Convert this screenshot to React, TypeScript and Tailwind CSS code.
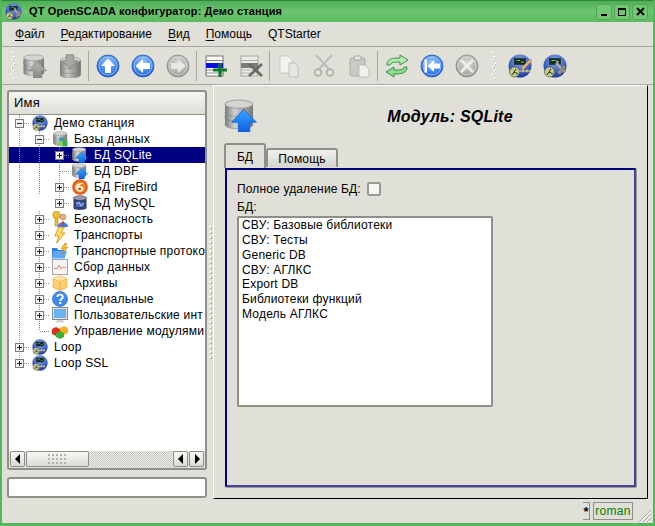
import { useId } from "react";
import type { ReactNode } from "react";

const BODY_FONT = "font-['Liberation_Sans',Arial,sans-serif]";

/* ---------- small drawings ---------- */

function Disc({ y, fill }: { y: number; fill: string }) {
  return (
    <g>
      <rect x="1" y={y} width="27" height="8" fill={fill} />
      <ellipse cx="14.5" cy={y + 8} rx="13.5" ry="4" fill={fill} stroke="#777" strokeWidth="0.5" />
      <rect x="1" y={y} width="27" height="8" fill={fill} />
      <ellipse cx="14.5" cy={y} rx="13.5" ry="4" fill="#d4d4d2" stroke="#8a8a8a" strokeWidth="0.7" />
    </g>
  );
}

function DbIcon({ size = 16, gray = false }: { size?: number; gray?: boolean }) {
  const id = useId();
  const fill = `url(#${id}-disc)`;
  return (
    <svg width={size} height={size} viewBox="0 0 32 32" className="shrink-0">
      <defs>
        <linearGradient id={`${id}-disc`} x1="0" x2="1" y1="0" y2="0">
          <stop offset="0%" stopColor="#7d7d7d" />
          <stop offset="35%" stopColor="#d2d2d0" />
          <stop offset="100%" stopColor="#777" />
        </linearGradient>
        <linearGradient id={`${id}-arrow`} x1="0" x2="0" y1="0" y2="1">
          <stop offset="0%" stopColor={gray ? "#b4b4ae" : "#38a8ff"} />
          <stop offset="100%" stopColor={gray ? "#8a8a84" : "#0a62e8"} />
        </linearGradient>
      </defs>
      <Disc y={17} fill={fill} />
      <Disc y={10} fill={fill} />
      <Disc y={5} fill={fill} />
      <path
        d="M19 10 L31.5 22.5 H25 V32 H14 V22.5 H7.5 Z"
        fill={`url(#${id}-arrow)`}
        stroke={gray ? "#777" : "#0a58c8"}
        strokeWidth="0.7"
      />
    </svg>
  );
}

function DbDownGray() {
  const id = useId();
  return (
    <svg width="24" height="24" viewBox="0 0 32 32">
      <defs>
        <linearGradient id={id} x1="0" x2="1" y1="0" y2="0">
          <stop offset="0%" stopColor="#7d7d78" />
          <stop offset="35%" stopColor="#c8c8c2" />
          <stop offset="100%" stopColor="#75756f" />
        </linearGradient>
      </defs>
      <g transform="translate(2 0)">
        <Disc y={20} fill={`url(#${id})`} />
        <Disc y={14} fill={`url(#${id})`} />
        <Disc y={8} fill={`url(#${id})`} />
      </g>
      <path d="M11 1 H21 V9 H26 L16 20 L6 9 H11 Z" fill="#a8a8a2" stroke="#6f6f6a" strokeWidth="0.8" />
    </svg>
  );
}

function DbsIcon() {
  const id = useId();
  return (
    <svg width="16" height="16" viewBox="0 0 32 32" className="shrink-0">
      <defs>
        <linearGradient id={id} x1="0" x2="1" y1="0" y2="0">
          <stop offset="0%" stopColor="#7d7d7d" />
          <stop offset="35%" stopColor="#d2d2d0" />
          <stop offset="100%" stopColor="#777" />
        </linearGradient>
      </defs>
      <g transform="translate(2 0)">
        <Disc y={17} fill={`url(#${id})`} />
        <Disc y={10} fill={`url(#${id})`} />
        <Disc y={5} fill={`url(#${id})`} />
      </g>
      <rect x="14" y="13" width="10" height="7" fill="#2f9ad0" />
      <rect x="20" y="18" width="11" height="13" fill="#3fae4f" />
      <rect x="10" y="21" width="11" height="9" fill="#8fcf5f" />
    </svg>
  );
}

type RoundKind = "up" | "left" | "right" | "first" | "close";

function RoundIcon({ kind, gray = false }: { kind: RoundKind; gray?: boolean }) {
  const id = `round-${kind}`;
  return (
    <svg width="24" height="24" viewBox="0 0 24 24">
      <defs>
        <radialGradient id={id} cx="50%" cy="35%" r="70%">
          <stop offset="0%" stopColor={gray ? "#d8d8d2" : "#a8ccff"} />
          <stop offset="60%" stopColor={gray ? "#b4b4ae" : "#3d85ee"} />
          <stop offset="100%" stopColor={gray ? "#8f8f8a" : "#1b55c8"} />
        </radialGradient>
      </defs>
      <circle cx="12" cy="12" r="11" fill={`url(#${id})`} stroke={gray ? "#8a8a85" : "#1f58b8"} strokeWidth="0.8" />
      <circle cx="12" cy="12" r="9" fill="none" stroke="#fff" strokeOpacity="0.45" />
      {kind === "up" && <path d="M12 4.5 L19 12 H15 V19 H9 V12 H5 Z" fill="#fff" />}
      {kind === "left" && <path d="M4.5 12 L12 5 V9 H19 V15 H12 V19 Z" fill="#fff" />}
      {kind === "right" && <path d="M19.5 12 L12 5 V9 H5 V15 H12 V19 Z" fill="#e8e8e4" />}
      {kind === "first" && <path d="M4.5 5.5 H7 V18.5 H4.5 Z M7.5 12 L14 6 V9.5 H20 V14.5 H14 V18 Z" fill="#fff" />}
      {kind === "close" && <path d="M7 5 L12 10 L17 5 L19 7 L14 12 L19 17 L17 19 L12 14 L7 19 L5 17 L10 12 L5 7 Z" fill="#eeeeea" />}
    </svg>
  );
}

function TableIcon({ gray = false }: { gray?: boolean }) {
  return (
    <svg width="24" height="24" viewBox="0 0 24 24">
      <rect x="2" y="2" width="17" height="20" fill={gray ? "#ecebe6" : "#fff"} stroke={gray ? "#9a9a94" : "#555"} strokeWidth="0.8" />
      <path d="M2 6.5 H19 M2 16 H19 M2 19 H19" stroke={gray ? "#a5a5a0" : "#666"} strokeWidth="0.8" />
      <rect x="2" y="9" width="17" height="5" fill={gray ? "#7d7d78" : "#0a10e0"} />
      {gray ? (
        <path d="M10 10 L23 22 M23 10 L10 22" stroke="#696964" strokeWidth="2.6" />
      ) : (
        <path d="M16 9 V23 M9 16 H23" stroke="#0a7a2a" strokeWidth="3" />
      )}
    </svg>
  );
}

function CopyIcon() {
  return (
    <svg width="24" height="24" viewBox="0 0 24 24">
      <path d="M3 2 H11 L15 6 V19 H3 Z" fill="#f2f2ee" stroke="#c4c4be" strokeWidth="0.8" />
      <path d="M12 9 H18 L21 12 V23 H12 Z" fill="#e6e6e0" stroke="#b5b5af" strokeWidth="0.8" />
    </svg>
  );
}

function CutIcon() {
  return (
    <svg width="24" height="24" viewBox="0 0 24 24">
      <path d="M7 15 L20 1 M17 15 L4 1" stroke="#bdbdb7" strokeWidth="2" />
      <circle cx="6" cy="18.5" r="3.4" fill="none" stroke="#b0b0aa" strokeWidth="1.8" />
      <circle cx="18" cy="18.5" r="3.4" fill="none" stroke="#b0b0aa" strokeWidth="1.8" />
    </svg>
  );
}

function PasteIcon() {
  return (
    <svg width="24" height="24" viewBox="0 0 24 24">
      <rect x="3" y="4" width="15" height="18" rx="2" fill="#c9c9c3" stroke="#a5a59f" strokeWidth="0.8" />
      <rect x="7" y="2" width="7" height="4" rx="1" fill="#e2e2dc" stroke="#9c9c96" strokeWidth="0.8" />
      <path d="M12 11 H18 L22 15 V23 H12 Z" fill="#f0f0ec" stroke="#b5b5af" strokeWidth="0.8" />
    </svg>
  );
}

function RefreshIcon() {
  return (
    <svg width="24" height="24" viewBox="0 0 24 24">
      <path d="M2 11 C2 5 7 4 15 4 V1 L23 6 L15 11 V8 C9 8 6 8 5 11 Z" fill="#b4ecb0" stroke="#2a8a38" strokeWidth="0.9" />
      <path d="M22 13 C22 19 17 20 9 20 V23 L1 18 L9 13 V16 C15 16 18 16 19 13 Z" fill="#8fdc8f" stroke="#2a8a38" strokeWidth="0.9" />
    </svg>
  );
}

function StationIcon({ tool, size = 24, uid }: { tool?: "pen" | "wrench"; size?: number; uid: string }) {
  return (
    <svg width={size} height={size} viewBox="0 0 24 24" className="shrink-0">
      <defs>
        <radialGradient id={uid} cx="50%" cy="30%" r="75%">
          <stop offset="0%" stopColor="#8fa8ee" />
          <stop offset="70%" stopColor="#3455b8" />
          <stop offset="100%" stopColor="#1c3288" />
        </radialGradient>
      </defs>
      <circle cx="12" cy="12" r="11.5" fill={`url(#${uid})`} />
      <rect x="6.5" y="4.5" width="11" height="6" fill="#14301c" stroke="#0c1a10" strokeWidth="0.5" />
      <path d="M8.5 6.5 H12 M13 8 H16" stroke="#5fd05f" strokeWidth="1" />
      <circle cx="6.5" cy="18" r="5" fill="#c8cf8c" stroke="#444" strokeWidth="0.6" />
      <path d="M4 21 L8 15 M6 18 L10 20" stroke="#222" strokeWidth="1" />
      {tool === "pen" && <path d="M13 14 L22 5 L24 7 L15 16 Z" fill="#e2b078" stroke="#8a6a44" strokeWidth="0.5" />}
      {tool === "pen" && <path d="M11 17 H23 M15 15.5 V18.5 M19 15.5 V18.5" stroke="#e6e36a" strokeWidth="1" />}
      {tool === "wrench" && <path d="M11 9 L14 12 L20 19 L23 17 L16 10 L15 7 L12 6 L13.5 9 L12 10 Z" fill="#aab0b8" stroke="#555" strokeWidth="0.5" />}
      {tool === "wrench" && <path d="M14 18 L21 11 L23 13 L17 21 Z" fill="#8f8f8f" stroke="#555" strokeWidth="0.5" />}
      {!tool && <path d="M11 17 H20 M14 15.5 V18.5 M18 15.5 V18.5" stroke="#e6e36a" strokeWidth="1.1" />}
    </svg>
  );
}

function FireIcon() {
  return (
    <svg width="16" height="16" viewBox="0 0 16 16" className="shrink-0">
      <circle cx="8" cy="8" r="7.8" fill="#e8501a" />
      <circle cx="8" cy="8" r="6" fill="#f0801c" />
      <path d="M3.5 9 C3.5 4.5 9 2.5 12 5.5 C10 4.5 7.5 5.5 8 7.5 C11 6.5 12.5 9 11 11.5 C9 14 4.5 13 3.5 9 Z" fill="#fff2d0" />
      <path d="M6 9.5 C7.5 8 9.5 9 9 10.5 C8 11.5 6.5 11 6 9.5 Z" fill="#d8360f" />
    </svg>
  );
}

function MysqlIcon() {
  return (
    <svg width="16" height="16" viewBox="0 0 16 16" className="shrink-0">
      <path d="M1.5 3 V13 C1.5 15.5 14.5 15.5 14.5 13 V3 Z" fill="#2f3f78" />
      <ellipse cx="8" cy="3" rx="6.5" ry="2.3" fill="#9aa0b0" stroke="#333" strokeWidth="0.5" />
      <path d="M4 7 H12 V12 H4 Z" fill="#4c68b8" />
      <path d="M4 9 L7 7 L9 11 L12 8" stroke="#b8c8f0" strokeWidth="1" fill="none" />
    </svg>
  );
}

function KeysIcon() {
  return (
    <svg width="16" height="16" viewBox="0 0 16 16" className="shrink-0">
      <circle cx="4.5" cy="4" r="3.8" fill="#f0c030" stroke="#a07810" strokeWidth="0.5" />
      <path d="M3 7 H6 V15 H3 Z" fill="#f0c030" stroke="#a07810" strokeWidth="0.5" />
      <circle cx="11" cy="6" r="3" fill="#e8b088" stroke="#a07050" strokeWidth="0.5" />
      <path d="M5.5 16 C5.5 9.5 16 9.5 16 16 Z" fill="#3f7ee0" />
      <path d="M10 10.5 H12 L11.5 15 H10.5 Z" fill="#d83020" />
    </svg>
  );
}

function BoltIcon() {
  return (
    <svg width="16" height="16" viewBox="0 0 16 16" className="shrink-0">
      <path d="M6.5 0 L3 9 H7 L4.5 16 L13 6 H9 L12.5 0 Z" fill="#f8e060" stroke="#e87818" strokeWidth="0.8" />
    </svg>
  );
}

function FolderBoltIcon() {
  return (
    <svg width="16" height="16" viewBox="0 0 16 16" className="shrink-0">
      <path d="M0 5 H5 L6.5 7 H13 V15 H0 Z" fill="#2f7ee0" />
      <path d="M1.5 8 H15 L12.5 15.5 H0 Z" fill="#5ea8f5" />
      <path d="M13 0 L9 6 H12 L10 11 L16 4 H13 L15 0 Z" fill="#f5c020" stroke="#c86010" strokeWidth="0.5" />
    </svg>
  );
}

function ChartIcon() {
  return (
    <svg width="16" height="16" viewBox="0 0 16 16" className="shrink-0">
      <rect x="0.5" y="0.5" width="15" height="15" fill="#f4f4f2" stroke="#a5a5a5" />
      <path d="M2 9 L5 10 L7 6 L9 10 L11 8 L14 9" stroke="#e58080" strokeWidth="1" fill="none" />
    </svg>
  );
}

function BoxIcon() {
  return (
    <svg width="16" height="16" viewBox="0 0 16 16" className="shrink-0">
      <path d="M8 0.5 L15 3.5 V12.5 L8 15.5 L1 12.5 V3.5 Z" fill="#fbd070" stroke="#d8a040" strokeWidth="0.6" />
      <path d="M1 3.5 L8 6.5 L15 3.5 M8 6.5 V15.5" stroke="#e0a840" strokeWidth="0.7" fill="none" />
      <path d="M1 3.5 L8 0.5 L15 3.5 L8 6.5 Z" fill="#fde4a0" />
    </svg>
  );
}

function HelpIcon() {
  return (
    <svg width="16" height="16" viewBox="0 0 16 16" className="shrink-0">
      <circle cx="8" cy="8" r="7.6" fill="#3f88f0" stroke="#1c50b0" strokeWidth="0.5" />
      <path d="M5.3 6 C5.3 2.8 10.8 2.8 10.8 6 C10.8 8 8.2 8 8.2 10" stroke="#fff" strokeWidth="1.9" fill="none" />
      <rect x="7.2" y="11" width="2" height="2" fill="#fff" />
    </svg>
  );
}

function MonitorIcon() {
  return (
    <svg width="16" height="16" viewBox="0 0 16 16" className="shrink-0">
      <rect x="0.5" y="0.5" width="15" height="12" fill="#e0e0e0" stroke="#8a8a8a" />
      <rect x="2" y="2" width="12" height="9" fill="#68b4f0" />
      <path d="M5 13 H11 L12.5 15.5 H3.5 Z" fill="#d4d4d4" />
    </svg>
  );
}

function CubesIcon() {
  return (
    <svg width="16" height="16" viewBox="0 0 16 16" className="shrink-0">
      <path d="M0 6 L4 4 L8 6 V11 L4 13 L0 11 Z" fill="#e02c20" />
      <path d="M8 5 L12 3 L16 5 V10 L12 12 L8 10 Z" fill="#f0b020" />
      <path d="M4 10 L8 8 L12 10 V14 L8 16 L4 14 Z" fill="#38b030" />
    </svg>
  );
}

/* ---------- tree ---------- */

type Connector = "none" | "pass" | "tee" | "elbow";
type Expander = "plus" | "minus" | null;

function TreeCell({ line, expander }: { line: Connector; expander?: Expander }) {
  return (
    <svg width="20" height="16" className="shrink-0" shapeRendering="crispEdges">
      {line !== "none" && (
        <path d={line === "elbow" ? "M10.5 0 V8" : "M10.5 0 V16"} stroke="#8a8a8a" strokeDasharray="1 1" />
      )}
      {(line === "tee" || line === "elbow") && <path d="M11 8.5 H20" stroke="#8a8a8a" strokeDasharray="1 1" />}
      {expander && (
        <g>
          <rect x="6.5" y="4.5" width="8" height="8" fill="#f2f1ec" stroke="#7a7a7a" />
          <path d="M8 8.5 H13" stroke="#222" />
          {expander === "plus" && <path d="M10.5 6 V11" stroke="#222" />}
        </g>
      )}
    </svg>
  );
}

type TreeRowProps = {
  guides: Connector[];
  line: Connector;
  expander?: Expander;
  icon: ReactNode;
  label: string;
  selected?: boolean;
};

function TreeRow({ guides, line, expander, icon, label, selected }: TreeRowProps) {
  return (
    <div className={`flex h-4 items-center whitespace-nowrap ${selected ? "bg-[#000080] text-white" : "text-black"}`}>
      {guides.map((g, i) => (
        <TreeCell key={i} line={g} />
      ))}
      <TreeCell line={line} expander={expander} />
      <span className="ml-[3px] flex h-4 w-4 shrink-0 items-center justify-center">{icon}</span>
      <span className="ml-[6px]">{label}</span>
    </div>
  );
}

function Tree() {
  return (
    <div className="min-h-0 flex-1 overflow-hidden bg-white text-[12px] tracking-[0.22px]">
      <TreeRow guides={[]} line="tee" expander="minus" icon={<StationIcon size={16} uid="st-demo" />} label="Демо станция" />
      <TreeRow guides={["pass"]} line="tee" expander="minus" icon={<DbsIcon />} label="Базы данных" />
      <TreeRow guides={["pass", "pass"]} line="tee" expander="plus" icon={<DbIcon />} label="БД SQLite" selected />
      <TreeRow guides={["pass", "pass"]} line="tee" icon={<DbIcon />} label="БД DBF" />
      <TreeRow guides={["pass", "pass"]} line="tee" expander="plus" icon={<FireIcon />} label="БД FireBird" />
      <TreeRow guides={["pass", "none"]} line="elbow" expander="plus" icon={<MysqlIcon />} label="БД MySQL" />
      <TreeRow guides={["pass"]} line="tee" expander="plus" icon={<KeysIcon />} label="Безопасность" />
      <TreeRow guides={["pass"]} line="tee" expander="plus" icon={<BoltIcon />} label="Транспорты" />
      <TreeRow guides={["pass"]} line="tee" expander="plus" icon={<FolderBoltIcon />} label="Транспортные протоко" />
      <TreeRow guides={["pass"]} line="tee" expander="plus" icon={<ChartIcon />} label="Сбор данных" />
      <TreeRow guides={["pass"]} line="tee" expander="plus" icon={<BoxIcon />} label="Архивы" />
      <TreeRow guides={["pass"]} line="tee" expander="plus" icon={<HelpIcon />} label="Специальные" />
      <TreeRow guides={["pass"]} line="tee" expander="plus" icon={<MonitorIcon />} label="Пользовательские инт" />
      <TreeRow guides={["pass"]} line="elbow" icon={<CubesIcon />} label="Управление модулями" />
      <TreeRow guides={[]} line="tee" expander="plus" icon={<StationIcon size={16} uid="st-loop" />} label="Loop" />
      <TreeRow guides={[]} line="elbow" expander="plus" icon={<StationIcon size={16} uid="st-ssl" />} label="Loop SSL" />
    </div>
  );
}

/* ---------- chrome ---------- */

function GripDots() {
  return (
    <svg width="7" height="30" className="shrink-0" shapeRendering="crispEdges">
      {Array.from({ length: 8 }).map((_, i) => (
        <g key={i}>
          <rect x={i % 2 ? 3 : 1} y={i * 3.6 + 1} width="2" height="2" fill="#fff" />
          <rect x={i % 2 ? 4 : 2} y={i * 3.6 + 2} width="1" height="1" fill="#a8a8a2" />
        </g>
      ))}
    </svg>
  );
}

function ToolSep() {
  return <div className="mx-[1px] h-[30px] w-[1px] shrink-0 border-l border-[#a8a8a2] bg-white" />;
}

function ToolBtn({ children }: { children: ReactNode }) {
  return <div className="flex h-[30px] w-[35px] shrink-0 items-center justify-center">{children}</div>;
}

function WinBtn({ children }: { children: ReactNode }) {
  return (
    <div className="flex h-4 w-4 items-center justify-center rounded-[3px] border border-[#52a556] bg-[#74c677]">
      {children}
    </div>
  );
}

function MenuItem({ first, rest }: { first: string; rest: string }) {
  return (
    <span>
      <span className="underline underline-offset-2">{first}</span>
      {rest}
    </span>
  );
}

function ScrollBtn({ dir }: { dir: "left" | "right" }) {
  return (
    <div className="flex h-[16px] w-[15px] shrink-0 items-center justify-center rounded-[2px] border border-[#8f8f8a] bg-gradient-to-b from-[#f8f8f4] to-[#dcdbd4]">
      <svg width="6" height="10" viewBox="0 0 6 10">
        <path d={dir === "left" ? "M5 0 V10 L0 5 Z" : "M1 0 V10 L6 5 Z"} fill="#000" />
      </svg>
    </div>
  );
}

function ScrollBar() {
  return (
    <div className="flex h-[17px] shrink-0 items-center gap-[1px] bg-[#e0dfd8] px-[1px] pb-[1px]">
      <ScrollBtn dir="left" />
      <div className="flex h-[16px] w-[63px] shrink-0 items-center justify-center rounded-[2px] border border-[#8f8f8a] bg-gradient-to-b from-[#f8f8f4] to-[#dcdbd4]">
        <svg width="20" height="11" shapeRendering="crispEdges">
          {[0, 4, 8].map((y) =>
            [0, 4, 8, 12, 16].map((x) => <rect key={`${x}-${y}`} x={x} y={y} width="2" height="2" fill="#b4b4ae" />),
          )}
        </svg>
      </div>
      <div className="h-[16px] flex-1 bg-[repeating-conic-gradient(#c4c4c0_0_25%,#f0f0ec_0_50%)] bg-[length:2px_2px]" />
      <ScrollBtn dir="left" />
      <ScrollBtn dir="right" />
    </div>
  );
}

function Splitter() {
  return (
    <div className="flex w-[6px] shrink-0 flex-col items-center justify-center gap-[3px]">
      {Array.from({ length: 27 }).map((_, i) => (
        <div key={i} className="h-[2px] w-[2px] bg-[#f8f8f4] shadow-[1px_1px_0_#b0b0aa]" />
      ))}
    </div>
  );
}

const DB_LIST = [
  "СВУ: Базовые библиотеки",
  "СВУ: Тесты",
  "Generic DB",
  "СВУ: АГЛКС",
  "Export DB",
  "Библиотеки функций",
  "Модель АГЛКС",
];

export default function App() {
  return (
    <div className={`flex h-[526px] w-[655px] flex-col overflow-hidden border-x-2 border-b-[3px] border-[#55b65b] bg-[#e0dfd8] text-[12px] text-black ${BODY_FONT}`}>
      {/* title bar */}
      <div className="-mx-[2px] flex h-[22px] shrink-0 items-center border-t border-[#2f8a3c] bg-gradient-to-b from-[#4fae57] via-[#6cc46f] to-[#5cbb60] pl-[5px] pr-[7px]">
        <StationIcon tool="wrench" size={17} uid="st-title" />
        <span className="ml-[7px] flex-1 text-[11px] font-bold leading-none tracking-[0.13px]">
          QT OpenSCADA конфигуратор: Демо станция
        </span>
        <div className="flex gap-[2px]">
          <WinBtn>
            <div className="mt-[7px] h-[2px] w-[6px] bg-black" />
          </WinBtn>
          <WinBtn>
            <div className="h-[8px] w-[8px] border border-t-2 border-black" />
          </WinBtn>
          <WinBtn>
            <svg width="9" height="9" viewBox="0 0 9 9">
              <path d="M1 1 L8 8 M8 1 L1 8" stroke="#000" strokeWidth="2" />
            </svg>
          </WinBtn>
        </div>
      </div>

      {/* menu */}
      <div className="flex h-[25px] shrink-0 items-center gap-4 border-b border-[#a8a8a2] pl-[13px] text-[12px]">
        <MenuItem first="Ф" rest="айл" />
        <MenuItem first="Р" rest="едактирование" />
        <MenuItem first="В" rest="ид" />
        <MenuItem first="П" rest="омощь" />
        <span>QTStarter</span>
      </div>

      {/* toolbar */}
      <div className="flex h-[38px] shrink-0 items-center border-b border-[#a8a8a2] pl-[8px]">
        <GripDots />
        <ToolBtn>
          <DbIcon size={24} gray />
        </ToolBtn>
        <ToolBtn>
          <DbDownGray />
        </ToolBtn>
        <ToolSep />
        <ToolBtn>
          <RoundIcon kind="up" />
        </ToolBtn>
        <ToolBtn>
          <RoundIcon kind="left" />
        </ToolBtn>
        <ToolBtn>
          <RoundIcon kind="right" gray />
        </ToolBtn>
        <ToolSep />
        <ToolBtn>
          <TableIcon />
        </ToolBtn>
        <ToolBtn>
          <TableIcon gray />
        </ToolBtn>
        <ToolSep />
        <ToolBtn>
          <CopyIcon />
        </ToolBtn>
        <ToolBtn>
          <CutIcon />
        </ToolBtn>
        <ToolBtn>
          <PasteIcon />
        </ToolBtn>
        <ToolSep />
        <ToolBtn>
          <RefreshIcon />
        </ToolBtn>
        <ToolBtn>
          <RoundIcon kind="first" />
        </ToolBtn>
        <ToolBtn>
          <RoundIcon kind="close" gray />
        </ToolBtn>
        <div className="ml-[7px] mr-[4px]">
          <GripDots />
        </div>
        <ToolBtn>
          <StationIcon tool="pen" uid="st-pen" />
        </ToolBtn>
        <ToolBtn>
          <StationIcon tool="wrench" uid="st-wrench" />
        </ToolBtn>
      </div>

      {/* main */}
      <div className="flex min-h-0 flex-1 pl-[5px]">
        <div className="flex w-[200px] shrink-0 flex-col pt-[5px]">
          <div className="flex h-[380px] flex-col overflow-hidden rounded-[3px] border-2 border-[#8f8f8a]">
            <div className="flex h-[23px] shrink-0 items-center border-b border-[#8f8f8a] bg-gradient-to-b from-[#f6f6f2] to-[#dedDd6] pl-[5px] text-[13px] tracking-[0.2px]">
              Имя
            </div>
            <Tree />
            <ScrollBar />
          </div>
          <div className="mt-[7px] h-[21px] rounded-[3px] border-2 border-[#8f8f8a] bg-white" />
        </div>

        <Splitter />

        {/* module page */}
        <div className="flex w-[435px] shrink-0 flex-col border-y border-r border-y-white border-r-black border-b-black border-l border-l-white pl-[10px] pr-[9px] pt-[13px]">
          <div className="flex h-[44px] shrink-0 items-start">
            <DbIcon size={33} />
            <div className="flex-1 pl-[5px] pt-[6px] text-center text-[16px] font-bold italic tracking-[0.2px]">
              Модуль: SQLite
            </div>
          </div>

          <div className="flex h-[24px] shrink-0 items-end">
            <div className="z-10 -mb-[1px] flex h-[25px] w-[42px] items-center justify-center rounded-t-[3px] border-x-2 border-t-2 border-[#8f8f8a] bg-[#e0dfd8]">
              БД
            </div>
            <div className="flex h-[19px] w-[72px] items-center justify-center rounded-t-[3px] border-x-2 border-t-2 border-[#8f8f8a] bg-gradient-to-b from-[#f2f2ee] to-[#d4d3cc] tracking-[0.2px]">
              Помощь
            </div>
          </div>

          <div className="ml-[1px] mt-[1px] h-[320px] w-[412px] rounded-[2px] border-r border-b border-[#9a9a94]">
            <div className="flex h-full flex-col border-2 border-[#000080] border-r-[#44449c] border-b-[#44449c] pl-[10px] pt-[12px]">
              <div className="flex h-[14px] items-center tracking-[0.15px]">
                <span>Полное удаление БД:</span>
                <div className="ml-[6px] h-[14px] w-[14px] rounded-[2px] border-2 border-[#9a9a94] bg-[#f6f6f2]" />
              </div>
              <div className="mt-[4px] h-[14px] leading-[14px] tracking-[0.15px]">БД:</div>
              <div className="mt-[2px] h-[191px] w-[256px] rounded-[2px] border-2 border-[#8f8f8a] bg-white pl-[3px] tracking-[0.2px]">
                {DB_LIST.map((item) => (
                  <div key={item} className="h-[14.85px] leading-[14px]">
                    {item}
                  </div>
                ))}
              </div>
            </div>
          </div>
        </div>
      </div>

      {/* status bar */}
      <div className="flex h-[24px] shrink-0 items-center justify-end pr-[2px]">
        <div className="flex h-[18px] w-[7px] items-center justify-center border-y border-r border-[#8f8f8a] text-[13px] font-bold leading-none">
          *
        </div>
        <div className="ml-[3px] flex h-[18px] w-[40px] items-center justify-center border border-[#8f8f8a] text-[#008000] tracking-[0.3px]">
          roman
        </div>
        <svg width="13" height="13" viewBox="0 0 13 13" className="ml-[5px] mt-[9px] shrink-0">
          <path d="M13 1 L1 13 M13 5 L5 13 M13 9 L9 13" stroke="#a8a8a2" strokeWidth="1" />
          <path d="M13 2.5 L2.5 13 M13 6.5 L6.5 13 M13 10.5 L10.5 13" stroke="#fff" strokeWidth="1" />
        </svg>
      </div>
    </div>
  );
}
